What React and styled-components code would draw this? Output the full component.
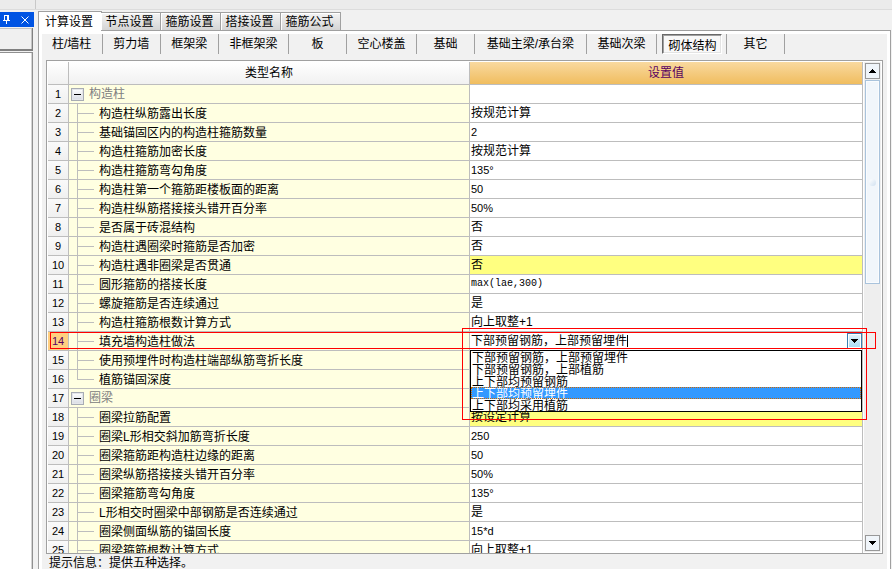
import React, { useState } from 'react'
import styled, { createGlobalStyle } from 'styled-components'

const line = '#bdbdbd'
const edge = '#a0a0a0'

const GlobalStyle = createGlobalStyle`
  * {
    box-sizing: border-box;
  }

  body {
    margin: 0;
    background: #f1f1f1;
    color: #000000;
    font: 12px/18px "Liberation Sans", "Noto Sans CJK SC", sans-serif;
    overflow: hidden;
  }

  button, input {
    margin: 0;
    padding: 0;
    border: 0;
    border-radius: 0;
    background: none;
    color: inherit;
    font: inherit;
  }
`

const Window = styled.div`
  display: flex;
  flex-direction: column;
  height: 100vh;
`

const TopStrip = styled.div`
  flex: none;
  height: 10px;
  background: #ebebeb;
  border-bottom: 1px solid #dcdcdc;

  &::before {
    content: '';
    display: block;
    width: 35px;
    height: 9px;
    border-right: 1px solid #c8c8c8;
  }
`

const Workspace = styled.div`
  display: flex;
  flex: 1;
  gap: 4px;
  min-height: 0;
  padding: 1px 1px 0 0;
`

const Sidebar = styled.aside`
  display: flex;
  flex-direction: column;
  flex: none;
  width: 34px;
  padding-top: 1px;
`

const SidebarTitle = styled.div`
  display: flex;
  align-items: center;
  justify-content: space-between;
  height: 15px;
  padding: 0 5px 0 2px;
  background: #0054e3;
`

const TitleButton = styled.button`
  display: flex;
  color: #ffffff;
`

const SidebarHead = styled.button`
  height: 23px;
  margin: 1px 1px 1px 0;
  background: #f0f0f0;
  border: solid #808080;
  border-width: 0 1px 2px 0;
  box-shadow: inset -1px 1px 0 #c4c4c4;
`

const SidebarBody = styled.div`
  flex: 1;
  margin-right: 1px;
  background: #ffffff;
  border: solid #909090;
  border-width: 1px 1px 0 0;
  box-shadow: inset -1px 0 0 #d4d4d4;
`

const Main = styled.main`
  display: flex;
  flex: 1;
  flex-direction: column;
  min-width: 0;
`

const Tabs = styled.div`
  display: flex;
  align-items: flex-end;
  height: 20px;
  margin-bottom: -1px;
  z-index: 1;
`

const Tab = styled.button`
  width: ${p => (p.$active ? 64 : 60)}px;
  height: ${p => (p.$active ? 20 : 18)}px;
  margin-right: ${p => (p.$active ? -1 : 0)}px;
  margin-bottom: ${p => (p.$active ? 0 : 1)}px;
  padding-right: 2px;
  line-height: 18px;
  background: ${p => (p.$active ? '#ffffff' : 'linear-gradient(#f4f4f4, #d4d4d4)')};
  border: 1px solid ${edge};
  border-left-width: ${p => (p.$active ? 1 : 0)}px;
  border-bottom: 0;
  box-shadow: ${p => (p.$active ? 'none' : 'inset 1px 1px 0 #ffffff')};
`

const Page = styled.section`
  display: flex;
  flex: 1;
  flex-direction: column;
  min-height: 0;
  padding: 3px 3px 0;
  background: #ffffff;
  border: 1px solid ${edge};
  border-bottom: 0;
`

const PageBody = styled.div`
  display: flex;
  flex: 1;
  flex-direction: column;
  min-height: 0;
  background: #f1f1f1;
`

const Toolbar = styled.nav`
  display: flex;
  flex: none;
  height: 20px;
`

const ToolItem = styled.div`
  display: flex;
  flex: none;
  min-width: ${p => (p.$wide ? 112 : 58)}px;
  padding: ${p => (p.$pressed ? '0 4px 0 5px' : '0')};
  border-right: 1px solid ${edge};
`

const ToolButton = styled.button`
  flex: 1;
  padding: ${p => (p.$pressed ? '2px 5px 0' : '0 11px 0 10px')};
  line-height: 18px;
  white-space: nowrap;
  background: ${p => (p.$pressed ? '#f8f8f8' : 'none')};
  border: ${p => (p.$pressed ? '1px solid' : '0')};
  border-color: #696969 #ffffff #ffffff #696969;
  box-shadow: ${p => (p.$pressed ? 'inset 1px 1px 0 #a0a0a0, inset -1px -1px 0 #e3e3e3' : 'none')};
`

const GridFrame = styled.div`
  display: flex;
  flex: 1;
  min-height: 0;
  margin: 6px 4px 0;
  padding: 1px;
  background: #ffffff;
  border: 1px solid ${edge};
  overflow: hidden;
`

const TableArea = styled.div`
  flex: 1;
  min-width: 0;
  margin-right: 1px;
`

const Table = styled.table`
  width: 100%;
  table-layout: fixed;
  border-spacing: 0;
`

const NumberCol = styled.col`
  width: 21px;
`

const NameCol = styled.col`
  width: 401px;
`

const HeadCell = styled.th`
  height: 23px;
  padding: 0;
  font-weight: normal;
  line-height: 22px;
  color: ${p => (p.$current ? '#580060' : '#000000')};
  background: ${p => (p.$current ? 'linear-gradient(#f9d99f, #f0bd5f)' : 'linear-gradient(#ffffff, #f1f1f1)')};
  border: solid ${line};
  border-width: 0 1px 1px 0;
`

const NumberCell = styled.th`
  height: 19px;
  padding: 0;
  font-size: 11px;
  font-weight: normal;
  line-height: 18px;
  color: ${p => (p.$current ? '#580060' : '#000000')};
  background: ${p => (p.$current ? '#ffcf80' : 'linear-gradient(#fafafa, #f0f0f0)')};
  border: solid ${line};
  border-width: 0 1px 1px 0;
`

const NameCell = styled.td`
  height: 19px;
  padding: 0;
  background: #ffffe1;
  border: solid ${line};
  border-width: 0 1px 1px 0;
`

const GroupName = styled.div`
  display: flex;
  align-items: center;
  gap: 5px;
  height: 18px;
  padding-left: 2px;
  color: #808080;
`

const Expander = styled.button`
  display: flex;
  align-items: center;
  justify-content: center;
  width: 13px;
  height: 13px;
  color: #000000;
  background: linear-gradient(#ffffff, #d8dce4);
  border: 1px solid #a8acb4;
  box-shadow: inset 0 0 0 1px #e4e6ea;

  &::before {
    content: '';
    width: 7px;
    height: 1px;
    background: currentColor;
  }
`

const ItemName = styled.div`
  display: flex;
  gap: 5px;
  height: 18px;
  padding-left: 8px;
  line-height: 20px;
  white-space: nowrap;
`

const Branch = styled.span`
  width: 17px;
  height: ${p => (p.$last ? 10 : 18)}px;
  border-left: 1px solid ${line};
  background: linear-gradient(${line}, ${line}) 0 9px / 100% 1px no-repeat;
`

const ValueCell = styled.td`
  position: relative;
  height: 19px;
  padding: 0 0 0 1px;
  line-height: 18px;
  font-family: ${p => (p.$code ? '"Liberation Mono", monospace' : 'inherit')};
  font-size: ${p => (p.$code ? 10 : p.$digits ? 11 : 12)}px;
  background: ${p => (p.$marked ? '#ffff80' : '#ffffff')};
  border: solid ${line};
  border-width: 0 1px 1px 0;
`

const Combo = styled.div`
  display: flex;
  align-items: center;
  height: 18px;
`

const ComboInput = styled.input`
  field-sizing: content;
  height: 18px;
  outline: 0;
`

const Caret = styled.span`
  width: 1px;
  height: 12px;
  background: #000000;
`

const ComboArrow = styled.button`
  display: flex;
  align-items: center;
  justify-content: center;
  width: 15px;
  height: 16px;
  margin-left: auto;
  background: linear-gradient(#e6f5fc, #a7daf3);
  border: 1px solid #3c7fb1;
  box-shadow: inset 0 0 0 1px #ffffff;
`

const Options = styled.ul`
  position: absolute;
  top: 18px;
  left: 0;
  right: 0;
  z-index: 1;
  margin: 0;
  padding: 0;
  list-style: none;
  background: #ffffff;
  border: 1px solid #000000;
`

const Option = styled.li`
  height: 12px;
  padding-left: 1px;
  line-height: 14px;
  color: ${p => (p.$selected ? '#ffffff' : '#000000')};
  background: ${p => (p.$selected ? '#3399ff' : 'none')};
  outline: ${p => (p.$selected ? '1px dotted #cc6600' : '0')};
  outline-offset: -1px;
`

// red boxes drawn over the grid
const RowMark = styled.span`
  position: absolute;
  inset: 0 -14px 1px -420px;
  z-index: 2;
  border: 1px solid #ff0000;
  pointer-events: none;
`

const ListMark = styled.span`
  position: absolute;
  top: -4px;
  left: -8px;
  right: -5px;
  z-index: 2;
  height: 92px;
  border: 1px solid #ff0000;
  pointer-events: none;
`

const ScrollBar = styled.div`
  display: flex;
  flex: none;
  flex-direction: column;
  gap: 1px;
  width: 17px;
  padding: 1px;
  background: #eeeeee;
`

const ScrollArrow = styled.button`
  display: flex;
  flex: none;
  align-items: center;
  justify-content: center;
  height: 16px;
  background: #f0f5fa;
  border: 1px solid #989898;
`

const ScrollTrack = styled.div`
  flex: 1;
`

const ScrollThumb = styled.div`
  display: flex;
  align-items: center;
  justify-content: center;
  height: 45%;
  background: #f1f6fb;
  border: 1px solid #a9c3dc;
  box-shadow: inset 0 0 0 1px #fafcfe;

  &::before {
    content: '';
    width: 7px;
    height: 7px;
    border-radius: 50%;
    background: linear-gradient(135deg, #ffffff, #d0e0f0);
  }
`

const Hint = styled.p`
  flex: none;
  height: 15px;
  margin: 0 0 0 7px;
  line-height: 18px;
  white-space: nowrap;
`

const tabs = ['计算设置', '节点设置', '箍筋设置', '搭接设置', '箍筋公式']

const categories = [
  '柱/墙柱', '剪力墙', '框架梁', '非框架梁', '板', '空心楼盖',
  '基础', '基础主梁/承台梁', '基础次梁', '砌体结构', '其它'
]

const rows = [
  { name: '构造柱', group: true },
  { name: '构造柱纵筋露出长度', value: '按规范计算' },
  { name: '基础锚固区内的构造柱箍筋数量', value: '2' },
  { name: '构造柱箍筋加密长度', value: '按规范计算' },
  { name: '构造柱箍筋弯勾角度', value: '135°' },
  { name: '构造柱第一个箍筋距楼板面的距离', value: '50' },
  { name: '构造柱纵筋搭接接头错开百分率', value: '50%' },
  { name: '是否属于砖混结构', value: '否' },
  { name: '构造柱遇圈梁时箍筋是否加密', value: '否' },
  { name: '构造柱遇非圈梁是否贯通', value: '否', marked: true },
  { name: '圆形箍筋的搭接长度', value: 'max(lae,300)' },
  { name: '螺旋箍筋是否连续通过', value: '是' },
  { name: '构造柱箍筋根数计算方式', value: '向上取整+1' },
  { name: '填充墙构造柱做法', combo: true },
  { name: '使用预埋件时构造柱端部纵筋弯折长度', value: '' },
  { name: '植筋锚固深度', value: '', last: true },
  { name: '圈梁', group: true },
  { name: '圈梁拉筋配置', value: '按设定计算', marked: true },
  { name: '圈梁L形相交斜加筋弯折长度', value: '250' },
  { name: '圈梁箍筋距构造柱边缘的距离', value: '50' },
  { name: '圈梁纵筋搭接接头错开百分率', value: '50%' },
  { name: '圈梁箍筋弯勾角度', value: '135°' },
  { name: 'L形相交时圈梁中部钢筋是否连续通过', value: '是' },
  { name: '圈梁侧面纵筋的锚固长度', value: '15*d' },
  { name: '圈梁箍筋根数计算方式', value: '向上取整+1' }
]

const methods = [
  '下部预留钢筋，上部预留埋件',
  '下部预留钢筋，上部植筋',
  '上下部均预留钢筋',
  '上下部均预留埋件',
  '上下部均采用植筋'
]

const Arrow = ({ up }) => (
  <svg width='7' height='4' viewBox='0 0 7 4' shapeRendering='crispEdges'>
    <path d={up ? 'M3 0h1v1h1v1h1v1h1v1H0V3h1V2h1V1h1z' : 'M0 0h7v1H6v1H5v1H4v1H3V3H2V2H1V1H0z'} />
  </svg>
)

const MethodCombo = () => {
  const [value, setValue] = useState(methods[0])
  const [selected, setSelected] = useState(3)
  return (
    <>
      <Combo>
        <ComboInput
          role='combobox'
          aria-label='填充墙构造柱做法'
          aria-expanded='true'
          aria-controls='methods'
          value={value}
          onChange={e => setValue(e.target.value)}
        />
        <Caret />
        <ComboArrow aria-label='展开'><Arrow /></ComboArrow>
      </Combo>
      <Options id='methods' role='listbox' aria-label='填充墙构造柱做法'>
        {methods.map((m, i) => (
          <Option
            key={m}
            role='option'
            aria-selected={i === selected}
            $selected={i === selected}
            onMouseEnter={() => setSelected(i)}
            onClick={() => setValue(m)}
          >
            {m}
          </Option>
        ))}
      </Options>
      <RowMark />
      <ListMark />
    </>
  )
}

const Row = ({ row, index }) => {
  const value = row.value || ''
  return (
    <tr>
      <NumberCell scope='row' $current={row.combo}>{index + 1}</NumberCell>
      <NameCell>
        {row.group
          ? <GroupName><Expander aria-label={`折叠${row.name}`} />{row.name}</GroupName>
          : <ItemName><Branch $last={row.last} />{row.name}</ItemName>}
      </NameCell>
      <ValueCell $marked={row.marked} $code={/^[a-z]/.test(value)} $digits={/^\d/.test(value)}>
        {row.combo ? <MethodCombo /> : value}
      </ValueCell>
    </tr>
  )
}

const App = () => {
  const [tab, setTab] = useState(0)
  const [category, setCategory] = useState(9)
  return (
    <Window>
      <GlobalStyle />
      <TopStrip />
      <Workspace>
        <Sidebar>
          <SidebarTitle>
            <TitleButton aria-label='固定'>
              <svg width='9' height='9' viewBox='0 0 9 9' shapeRendering='crispEdges'>
                <path fill='#fff' d='M2 0h5v5h1v1H5v3H4V6H1V5h1zM3 1v4h2V1z' />
              </svg>
            </TitleButton>
            <TitleButton aria-label='关闭'>
              <svg width='8' height='8' viewBox='0 0 8 8'>
                <path stroke='#fff' d='M.5.5l7 7M7.5.5l-7 7' />
              </svg>
            </TitleButton>
          </SidebarTitle>
          <SidebarHead aria-label='导航' />
          <SidebarBody />
        </Sidebar>
        <Main>
          <Tabs role='tablist'>
            {tabs.map((t, i) => (
              <Tab key={t} role='tab' aria-selected={i === tab} $active={i === tab} onClick={() => setTab(i)}>{t}</Tab>
            ))}
          </Tabs>
          <Page>
            <PageBody>
              <Toolbar>
                {categories.map((c, i) => (
                  <ToolItem key={c} $pressed={i === category} $wide={c.length > 6}>
                    <ToolButton $pressed={i === category} onClick={() => setCategory(i)}>{c}</ToolButton>
                  </ToolItem>
                ))}
              </Toolbar>
              <GridFrame>
                <TableArea>
                  <Table>
                    <colgroup>
                      <NumberCol />
                      <NameCol />
                      <col />
                    </colgroup>
                    <thead>
                      <tr>
                        <HeadCell />
                        <HeadCell scope='col'>类型名称</HeadCell>
                        <HeadCell scope='col' $current>设置值</HeadCell>
                      </tr>
                    </thead>
                    <tbody>
                      {rows.map((row, i) => <Row key={i} row={row} index={i} />)}
                    </tbody>
                  </Table>
                </TableArea>
                <ScrollBar>
                  <ScrollArrow aria-label='向上'><Arrow up /></ScrollArrow>
                  <ScrollTrack><ScrollThumb /></ScrollTrack>
                  <ScrollArrow aria-label='向下'><Arrow /></ScrollArrow>
                </ScrollBar>
              </GridFrame>
              <Hint>提示信息：提供五种选择。</Hint>
            </PageBody>
          </Page>
        </Main>
      </Workspace>
    </Window>
  )
}

export default App
